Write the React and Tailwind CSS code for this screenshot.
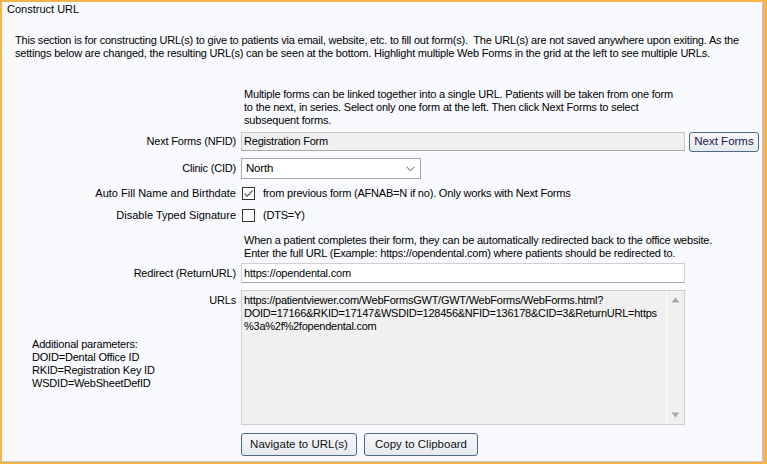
import React from 'react';

const font = { fontFamily: '"Liberation Sans", Arial, sans-serif' };

const Label = ({ children, className = '' }) => (
  <div className={`w-[235px] shrink-0 text-right pr-[1px] ${className}`}>{children}</div>
);

const Check = ({ checked }) => (
  <div className="w-[13px] h-[13px] border border-[#333] bg-white flex items-center justify-center">
    {checked && (
      <svg width="11" height="11" viewBox="0 0 11 11">
        <path d="M1.5 5.5 L4.2 8.2 L9.5 2.5" fill="none" stroke="#6b6b6b" strokeWidth="1.4" />
      </svg>
    )}
  </div>
);

const WinButton = ({ children, className = '' }) => (
  <button
    className={`border border-[#4f6a86] rounded-[3px] bg-gradient-to-b from-[#f6f8fa] to-[#e6eaef] text-[#1b1550] leading-none tracking-normal ${className}`}
  >
    {children}
  </button>
);

export default function App() {
  return (
    <div
      className="w-[767px] h-[464px] bg-[#f5b54b] pt-[2px] pl-[2px] pr-[4px] pb-[2px] text-[11px] leading-[13px] tracking-[-0.2px] text-black"
      style={font}
    >
      <div className="w-full h-full bg-[#f8fafd] border-r border-b border-[#c4c6ca] flex flex-col">
        {/* Title */}
        <div className="mt-[1px] pl-[5px] h-[13px] tracking-normal">Construct URL</div>

        {/* Intro */}
        <div className="mt-[18px] pl-[13px] whitespace-nowrap">
          This section is for constructing URL(s) to give to patients via email, website, etc. to fill out form(s).&nbsp; The URL(s) are not saved anywhere upon exiting. As the
          <br />
          settings below are changed, the resulting URL(s) can be seen at the bottom. Highlight multiple Web Forms in the grid at the left to see multiple URLs.
        </div>

        {/* Next forms note */}
        <div className="mt-[28px] pl-[242px] whitespace-nowrap">
          Multiple forms can be linked together into a single URL. Patients will be taken from one form
          <br />
          to the next, in series. Select only one form at the left. Then click Next Forms to select
          <br />
          subsequent forms.
        </div>

        {/* Next Forms */}
        <div className="mt-[5px] flex items-center h-[19px]">
          <Label>Next Forms (NFID)</Label>
          <div className="ml-[4px] w-[444px] h-[19px] bg-[#f0f0f0] border border-[#c9c9c9] border-b-[#a9a9a9] pl-[2px] flex items-center">
            Registration Form
          </div>
          <WinButton className="ml-[4px] w-[70px] h-[20px] text-[11.5px]">Next Forms</WinButton>
        </div>

        {/* Clinic */}
        <div className="mt-[7px] flex items-center h-[21px]">
          <Label>Clinic (CID)</Label>
          <div className="ml-[4px] w-[180px] h-[21px] bg-white border border-[#a5a5a5] pl-[4px] pr-[5px] flex items-center justify-between">
            <span className="text-[11.5px]">North</span>
            <svg width="9" height="6" viewBox="0 0 9 6">
              <path d="M0.5 0.8 L4.5 4.8 L8.5 0.8" fill="none" stroke="#555" strokeWidth="1" />
            </svg>
          </div>
        </div>

        {/* Auto Fill */}
        <div className="mt-[6px] flex items-center h-[16px]">
          <Label className="tracking-normal">Auto Fill Name and Birthdate</Label>
          <div className="ml-[5px]">
            <Check checked />
          </div>
          <span className="ml-[8px]">from previous form (AFNAB=N if no). Only works with Next Forms</span>
        </div>

        {/* Disable typed signature */}
        <div className="mt-[6px] flex items-center h-[16px]">
          <Label className="tracking-normal">Disable Typed Signature</Label>
          <div className="ml-[5px]">
            <Check />
          </div>
          <span className="ml-[8px]">(DTS=Y)</span>
        </div>

        {/* Redirect note */}
        <div className="mt-[11px] pl-[242px] whitespace-nowrap">
          When a patient completes their form, they can be automatically redirected back to the office website.
          <br />
          Enter the full URL (Example: https://opendental.com) where patients should be redirected to.
        </div>

        {/* Redirect */}
        <div className="mt-[3px] flex items-center h-[20px]">
          <Label>Redirect (ReturnURL)</Label>
          <div className="ml-[4px] w-[444px] h-[20px] bg-white border border-[#d0d0d0] border-b-[#a9a9a9] pl-[2px] flex items-center">
            https://opendental.com
          </div>
        </div>

        {/* URLs */}
        <div className="mt-[7px] flex h-[135px]">
          <div className="w-[235px] shrink-0 flex flex-col">
            <div className="text-right pr-[1px] pt-[4px]">URLs</div>
            <div className="mt-[31px] pl-[30px] whitespace-nowrap">
              Additional parameters:
              <br />
              DOID=Dental Office ID
              <br />
              RKID=Registration Key ID
              <br />
              WSDID=WebSheetDefID
            </div>
          </div>
          <div className="ml-[4px] w-[444px] h-[135px] bg-[#f0f0f0] border border-[#cfcfcf] flex">
            <div className="flex-1 pl-[2px] pt-[3px] whitespace-nowrap tracking-[-0.25px]">
              https://patientviewer.com/WebFormsGWT/GWT/WebForms/WebForms.html?
              <br />
              DOID=17166&amp;RKID=17147&amp;WSDID=128456&amp;NFID=136178&amp;CID=3&amp;ReturnURL=https
              <br />
              %3a%2f%2fopendental.com
            </div>
            <div className="w-[18px] border-l border-[#fbfbfb] flex flex-col items-center justify-between py-[6px]">
              <svg width="9" height="6" viewBox="0 0 9 6">
                <path d="M4.5 0.5 L8.5 5.5 L0.5 5.5 Z" fill="#a8a8a8" />
              </svg>
              <svg width="9" height="6" viewBox="0 0 9 6">
                <path d="M0.5 0.5 L8.5 0.5 L4.5 5.5 Z" fill="#a8a8a8" />
              </svg>
            </div>
          </div>
        </div>

        {/* Buttons */}
        <div className="mt-[8px] flex pl-[239px] gap-[7px]">
          <WinButton className="w-[116px] h-[23px] text-[11.5px] text-[#111]">Navigate to URL(s)</WinButton>
          <WinButton className="w-[114px] h-[23px] text-[11.5px] text-[#111]">Copy to Clipboard</WinButton>
        </div>
      </div>
    </div>
  );
}
